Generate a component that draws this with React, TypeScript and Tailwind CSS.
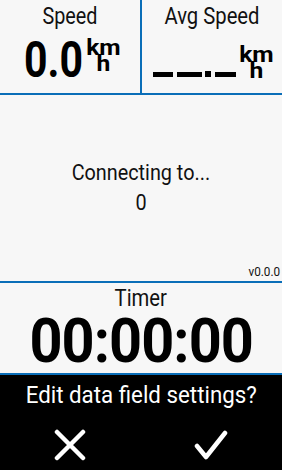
import React from "react";

const font = { fontFamily: "Roboto, 'Noto Sans', sans-serif" };

function Units() {
  return (
    <div className="flex flex-col items-center font-bold text-[22px] leading-[16px] text-black scale-x-[1.12]">
      <span>km</span>
      <span>h</span>
    </div>
  );
}

export default function App() {
  return (
    <div className="w-[282px] h-[470px] bg-[#f7f7f7] flex flex-col overflow-hidden" style={font}>
      {/* top row */}
      <div className="h-[93px] flex">
        <div className="w-[140px] flex flex-col items-center">
          <div className="text-[23px] leading-[26px] mt-[4px] text-[#111] scale-x-[0.86]">Speed</div>
          <div className="flex items-start mt-[6px] pl-[24px] w-full">
            <div className="w-[58px] h-[50px] overflow-visible">
              <span className="inline-block whitespace-nowrap font-bold text-[50px] leading-[48px] text-black origin-left scale-x-[0.82]">0.0</span>
            </div>
            <div className="mt-[4px] ml-[6px]">
              <Units />
            </div>
          </div>
        </div>
        <div className="w-[2px] bg-[#0a6eb8]" />
        <div className="flex-1 flex flex-col items-center">
          <div className="text-[23px] leading-[26px] mt-[4px] text-[#111] scale-x-[0.88]">Avg Speed</div>
          <div className="flex items-start mt-[12px] w-full pl-[11px]">
            <div className="flex items-end h-[35px]">
              <div className="w-[20px] h-[5px] bg-black mr-[4px]" />
              <div className="w-[25px] h-[5px] bg-black mr-[3px]" />
              <div className="w-[6px] h-[6px] bg-black mr-[4px]" />
              <div className="w-[21px] h-[5px] bg-black" />
            </div>
            <div className="ml-[5px] mt-[5px]">
              <Units />
            </div>
          </div>
        </div>
      </div>
      <div className="h-[2px] bg-[#0a6eb8]" />
      {/* middle */}
      <div className="h-[186px] flex flex-col">
        <div className="flex-1 flex flex-col items-center justify-center pt-[16px]">
          <div className="text-[22px] leading-[26px] text-[#111] scale-x-[0.9]">Connecting to...</div>
          <div className="text-[22px] leading-[26px] text-[#111] mt-[4px] scale-x-[0.9]">0</div>
        </div>
        <div className="flex justify-end pr-[2px] pb-[2px]">
          <span className="text-[13px] leading-[15px] text-[#111] origin-right scale-x-[0.9]">v0.0.0</span>
        </div>
      </div>
      <div className="h-[2px] bg-[#0a6eb8]" />
      {/* timer */}
      <div className="h-[90px] flex flex-col items-center">
        <div className="text-[23px] leading-[26px] mt-[3px] text-[#111] scale-x-[0.88]">Timer</div>
        <div className="font-bold text-[62px] leading-[58px] text-black scale-x-[0.93] tracking-[-1px]">00:00:00</div>
      </div>
      <div className="h-[2px] bg-[#0a6eb8]" />
      {/* dialog */}
      <div className="flex-1 bg-black flex flex-col items-center">
        <div className="text-white text-[24px] leading-[28px] mt-[6px] scale-x-[0.93] whitespace-nowrap">Edit data field settings?</div>
        <div className="w-full flex justify-between px-[54px] mt-[20px]">
          <svg width="32" height="32" viewBox="0 0 32 32">
            <path d="M3 3 L29 29 M29 3 L3 29" stroke="white" strokeWidth="4.5" strokeLinecap="round" fill="none" />
          </svg>
          <svg width="34" height="32" viewBox="0 0 34 32">
            <path d="M3 17 L12 28 L31 4" stroke="white" strokeWidth="4.5" strokeLinecap="round" strokeLinejoin="round" fill="none" />
          </svg>
        </div>
      </div>
    </div>
  );
}
